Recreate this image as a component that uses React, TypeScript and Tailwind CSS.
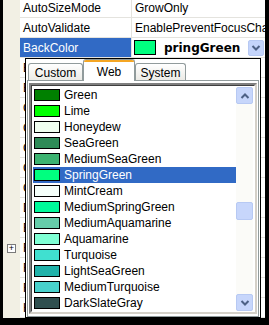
import React from "react";

const props: { name: string; value?: string; plus?: boolean }[] = [
  { name: "AutoSizeMode", value: "GrowOnly" },
  { name: "AutoValidate", value: "EnablePreventFocusChange" },
  { name: "BackColor" },
  { name: "BackgroundImage", value: "(none)" },
  { name: "BackgroundImageLayout", value: "Tile" },
  { name: "CancelButton", value: "(none)" },
  { name: "CausesValidation", value: "True" },
  { name: "ContextMenuStrip", value: "(none)" },
  { name: "ControlBox", value: "True" },
  { name: "Cursor", value: "Default" },
  { name: "DoubleBuffered", value: "False" },
  { name: "Enabled", value: "True" },
  { name: "Font", value: "Tahoma, 8.25pt", plus: true },
  { name: "ForeColor", value: "ControlText" },
  { name: "FormBorderStyle", value: "Sizable" },
  { name: "HelpButton", value: "False" },
];

const colors: [string, string][] = [
  ["Green", "#008000"],
  ["Lime", "#00ff00"],
  ["Honeydew", "#f0fff0"],
  ["SeaGreen", "#2e8b57"],
  ["MediumSeaGreen", "#3cb371"],
  ["SpringGreen", "#00ff7f"],
  ["MintCream", "#f5fffa"],
  ["MediumSpringGreen", "#00fa9a"],
  ["MediumAquamarine", "#66cdaa"],
  ["Aquamarine", "#7fffd4"],
  ["Turquoise", "#40e0d0"],
  ["LightSeaGreen", "#20b2aa"],
  ["MediumTurquoise", "#48d1cc"],
  ["DarkSlateGray", "#2f4f4f"],
  ["Teal", "#008080"],
];

function Chevron({ up = false }: { up?: boolean }) {
  return (
    <svg width="10" height="8" viewBox="0 0 10 8">
      <path
        d={up ? "M1.5 6 L5 2.5 L8.5 6" : "M1.5 2 L5 5.5 L8.5 2"}
        fill="none"
        stroke="#4d6185"
        strokeWidth="2"
      />
    </svg>
  );
}

function ScrollButton({ up = false }: { up?: boolean }) {
  return (
    <div className="flex h-[17px] w-[17px] shrink-0 items-center justify-center rounded-[2px] border border-[#b7c9f3] bg-[#c7d6fb]">
      <Chevron up={up} />
    </div>
  );
}

export default function App() {
  return (
    <div className="h-[325px] w-[269px] overflow-hidden bg-black pb-[7px] pl-[3px] pr-[4px] font-['Liberation_Sans',sans-serif] text-[12px] text-black">
      <div className="relative h-full overflow-hidden bg-white">
        {/* property grid */}
        <div className="mt-[-2px] flex flex-col">
          {props.map((p) => {
            const selected = p.name === "BackColor";
            return (
              <div key={p.name} className="flex h-[20px]">
                <div className="flex w-[17px] shrink-0 items-center justify-center bg-[#f2f0e4]">
                  {p.plus && (
                    <div className="flex h-[9px] w-[9px] items-center justify-center border border-[#7a7a7a] bg-white text-[9px] leading-none">
                      +
                    </div>
                  )}
                </div>
                <div className="flex flex-1 border-b border-[#e4e3de]">
                  <div
                    className={
                      selected
                        ? "flex w-[112px] shrink-0 items-center border-r border-[#e4e3de] bg-[#316ac5] pl-[3px] text-white"
                        : "flex w-[112px] shrink-0 items-center border-r border-[#e4e3de] pl-[3px]"
                    }
                  >
                    <span className="whitespace-nowrap">{p.name}</span>
                  </div>
                  {selected ? (
                    <div className="flex min-w-0 flex-1 items-center pl-[2px]">
                      <div className="h-[15px] w-[22px] shrink-0 border border-black bg-[#00ff7f]" />
                      <span className="ml-[8px] flex-1 overflow-hidden whitespace-nowrap font-['DejaVu_Sans',sans-serif] font-bold">
                        pringGreen
                      </span>
                      <div className="mr-[1px] flex h-[16px] w-[16px] items-center justify-center rounded-[2px] border border-[#b7c9f3] bg-[#c4d4fb]">
                        <Chevron />
                      </div>
                    </div>
                  ) : (
                    <div className="flex min-w-0 flex-1 items-center overflow-hidden pl-[3px]">
                      <span className="whitespace-nowrap">{p.value}</span>
                    </div>
                  )}
                </div>
              </div>
            );
          })}
        </div>

        {/* color picker drop-down */}
        <div className="absolute left-[22px] top-[58px] flex h-[260px] w-[236px] flex-col overflow-hidden border border-black bg-white px-[1px]">
          <div className="flex h-[21px] shrink-0 items-end pl-[1px]">
            <div className="flex h-[17px] w-[55px] items-center justify-center rounded-t-[3px] border border-b-0 border-[#919b9c] bg-gradient-to-b from-white to-[#ecebe6] pt-[2px]">
              Custom
            </div>
            <div className="relative z-10 mb-[-1px] flex h-[22px] w-[52px] flex-col rounded-t-[3px] border border-b-0 border-[#919b9c] bg-white">
              <div className="h-[3px] rounded-t-[2px] bg-[#f5a623]" />
              <div className="flex flex-1 items-start justify-center pt-[1px]">Web</div>
            </div>
            <div className="flex h-[17px] w-[51px] items-center justify-center rounded-t-[3px] border border-b-0 border-[#919b9c] bg-gradient-to-b from-white to-[#ecebe6] pt-[2px]">
              System
            </div>
          </div>
          <div className="flex min-h-0 flex-1 border border-[#919b9c] bg-white px-[1px] pb-[2px] pt-[2px]">
            <div className="flex min-h-0 flex-1 border-2 border-t-[#7f7f7f] border-l-[#7f7f7f] border-b-[#d4d0c8] border-r-[#d4d0c8] bg-white">
              <div className="flex min-h-0 flex-1 border border-t-[#404040] border-l-[#404040] border-b-white border-r-white px-[1px] pt-[1px]">
                <div className="flex min-h-0 flex-1 flex-col overflow-hidden">
                  {colors.map(([name, hex]) => (
                    <div
                      key={name}
                      className={
                        name === "SpringGreen"
                          ? "flex h-[16px] shrink-0 items-center bg-[#316ac5] text-white"
                          : "flex h-[16px] shrink-0 items-center"
                      }
                    >
                      <div
                        className="ml-[1px] h-[12px] w-[26px] shrink-0 border border-black"
                        style={{ backgroundColor: hex }}
                      />
                      <span className="ml-[4px] whitespace-nowrap">{name}</span>
                    </div>
                  ))}
                </div>
                <div className="flex min-h-0 w-[17px] shrink-0 flex-col bg-[#fbfbf8]">
                  <ScrollButton up />
                  <div className="h-[98px] shrink-0" />
                  <div className="h-[18px] w-[17px] shrink-0 rounded-[2px] border border-[#b7c9f3] bg-[#c7d6fb]" />
                  <div className="min-h-0 flex-1" />
                  <ScrollButton />
                </div>
              </div>
            </div>
          </div>
        </div>
      </div>
    </div>
  );
}
